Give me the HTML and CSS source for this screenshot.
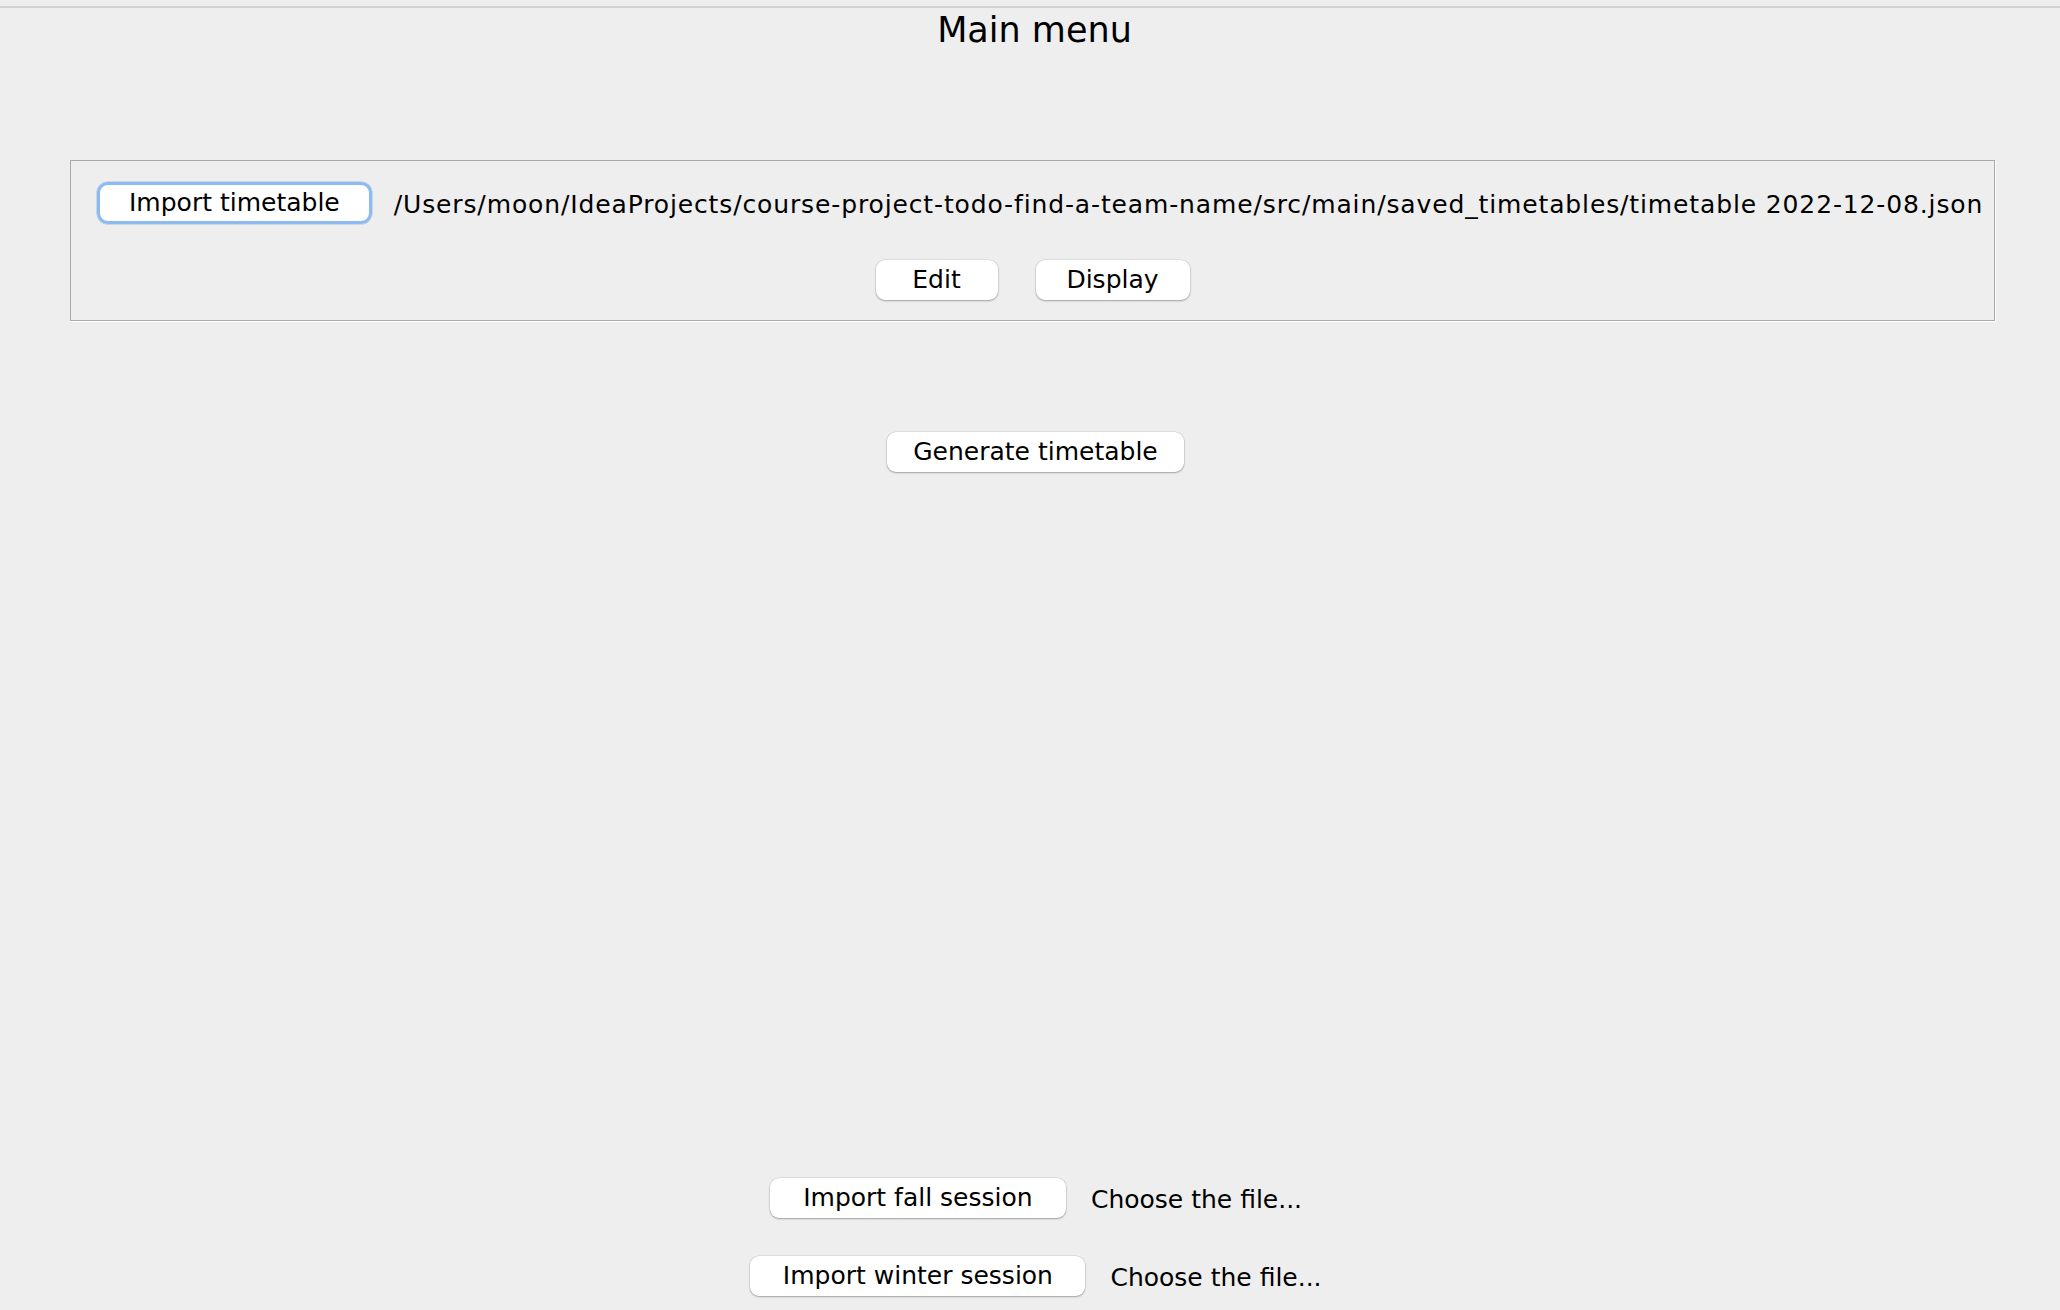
FILE: index.html
```html
<!DOCTYPE html>
<html>
<head>
<meta charset="utf-8">
<title>Main menu</title>
<link rel="stylesheet" href="styles.css">
</head>
<body>
<div class="app">
  <div class="topline"></div>
  <h1 class="title">Main menu</h1>
  <div class="panel">
    <div class="row row-import">
      <button class="btn btn-focus">Import timetable</button>
      <span class="path">/Users/moon/IdeaProjects/course-project-todo-find-a-team-name/src/main/saved_timetables/timetable 2022-12-08.json</span>
    </div>
    <div class="row row-actions">
      <button class="btn btn-edit">Edit</button>
      <button class="btn btn-display">Display</button>
    </div>
  </div>
  <div class="row row-generate">
    <button class="btn btn-generate">Generate timetable</button>
  </div>
  <div class="sessions">
    <div class="row row-session">
      <button class="btn btn-fall">Import fall session</button>
      <span class="label">Choose the file...</span>
    </div>
    <div class="row row-session">
      <button class="btn btn-winter">Import winter session</button>
      <span class="label">Choose the file...</span>
    </div>
  </div>
</div>
</body>
</html>
```
FILE: styles.css
```css
html, body {
  margin: 0;
  padding: 0;
  background: #eeeeee;
}
body {
  font-family: "DejaVu Sans", "Liberation Sans", sans-serif;
  color: #000;
}
.app {
  height: 1310px;
  display: flex;
  flex-direction: column;
  overflow: hidden;
}
.topline {
  margin-top: 6px;
  height: 0;
  border-top: 2px solid #d2d2d2;
}
.title {
  margin: 0;
  height: 152px;
  font-size: 35px;
  font-weight: normal;
  line-height: 44px;
  text-align: center;
  padding-left: 9px;
  box-sizing: border-box;
}
.panel {
  margin-left: 70px;
  width: 1923px;
  height: 159px;
  border: 1px solid #a9a9a9;
  box-shadow: 1px 1px 0 #ffffff;
  display: flex;
  flex-direction: column;
}
.row {
  display: flex;
  align-items: center;
  justify-content: center;
}
.row-import {
  justify-content: flex-start;
  margin-top: 21px;
  padding-left: 26px;
  gap: 22px;
}
.row-actions {
  margin-top: 36px;
  gap: 38px;
}
.btn {
  font-family: "DejaVu Sans", "Liberation Sans", sans-serif;
  font-size: 25px;
  height: 40px;
  padding: 0 0 1px;
  border: none;
  border-radius: 9px;
  background: #ffffff;
  color: #000;
  box-shadow: 0 0 0 0.5px rgba(0, 0, 0, 0.12), 0 1px 2px rgba(0, 0, 0, 0.28);
  white-space: nowrap;
}
.btn-focus {
  height: 42px;
  padding: 0 32px 1px;
  border-radius: 11px;
  box-shadow: inset 0 0 0 3px #8cbaf2, 0 0 0 0.5px rgba(60, 120, 200, 0.4);
}
.btn-edit {
  width: 122px;
}
.btn-display {
  width: 154px;
}
.btn-generate {
  width: 297px;
}
.btn-fall {
  width: 296px;
}
.btn-winter {
  width: 335px;
}
.path {
  font-size: 25px;
  white-space: nowrap;
  padding-top: 3px;
  letter-spacing: 0.87px;
}
.row-generate {
  margin-top: 111px;
  padding-left: 11px;
}
.sessions {
  margin-top: auto;
  padding-bottom: 14px;
  display: flex;
  flex-direction: column;
  gap: 38px;
}
.row-session {
  gap: 25px;
  padding-left: 12px;
}
.label {
  font-size: 25px;
  padding-top: 3px;
}
```
